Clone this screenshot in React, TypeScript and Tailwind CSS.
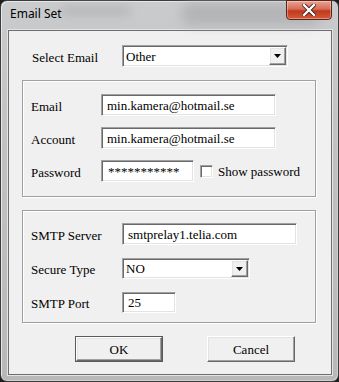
import React from "react";

const sunken =
  "border border-t-[#a0a0a0] border-l-[#a0a0a0] border-b-white border-r-white shadow-[inset_1px_1px_0_#696969,inset_-1px_-1px_0_#e3e3e3] bg-white";
const raised =
  "border border-t-white border-l-white border-b-[#696969] border-r-[#696969] shadow-[inset_-1px_-1px_0_#a0a0a0,inset_1px_1px_0_#e3e3e3] bg-[#f0f0f0]";
const group =
  "border border-[#a0a0a0] shadow-[1px_1px_0_#ffffff,inset_1px_1px_0_#ffffff]";

function DropArrow() {
  return (
    <div className={`${raised} w-[17px] h-full flex items-center justify-center`}>
      <svg width="7" height="4" viewBox="0 0 7 4">
        <path d="M0 0H7L3.5 4Z" fill="#000" />
      </svg>
    </div>
  );
}

function TextBox({ w, h = 22, value, pl = 5 }: { w: number; h?: number; value: string; pl?: number }) {
  return (
    <div
      className={`${sunken} flex items-center whitespace-nowrap overflow-hidden`}
      style={{ width: w, height: h, paddingLeft: pl }}
    >
      {value}
    </div>
  );
}

function Combo({ w, h, value }: { w: number; h: number; value: string }) {
  return (
    <div className={`${sunken} flex items-center p-[1px]`} style={{ width: w, height: h }}>
      <div className="flex-1 pl-[2px]">{value}</div>
      <DropArrow />
    </div>
  );
}

export default function App() {
  return (
    <div className="w-[339px] h-[382px] overflow-hidden bg-[#1e1e1e]">
      <div className="w-[339px] h-[382px] rounded-[7px] border border-[#3c3c3c] bg-[linear-gradient(180deg,#c9cbcd_0%,#bfc1c3_40%,#b6b8ba_100%)] flex flex-col shadow-[inset_1px_1px_0_#e8e8e8,inset_-1px_-1px_0_#d0d0d0]">
        {/* title bar */}
        <div className="h-[29px] flex items-start relative">
          <div className="absolute left-[180px] top-[2px] w-[140px] h-[22px] rounded-full bg-[#a9abad] blur-[6px] opacity-70" />
          <div className="absolute left-[60px] top-[4px] w-[70px] h-[12px] rounded-full bg-[#b3b5b7] blur-[4px] opacity-70" />
          <div className="relative pl-[9px] pt-[5px] text-[12px] text-black font-['Noto_Sans','Open_Sans',sans-serif] leading-[16px]">
            Email Set
          </div>
          <div className="relative ml-auto mr-[6px] mt-[-1px] w-[46px] h-[20px] rounded-b-[4px] border border-[#5a2418] bg-[linear-gradient(180deg,#e9a394_0%,#d66c56_45%,#c1391c_55%,#d5593a_100%)] flex items-center justify-center shadow-[inset_0_0_0_1px_rgba(255,255,255,0.35)]">
            <svg width="14" height="12" viewBox="0 0 14 12">
              <path d="M2 1L12 11M12 1L2 11" stroke="#3a1a12" strokeWidth="4" strokeLinecap="square" />
              <path d="M2 1L12 11M12 1L2 11" stroke="#ffffff" strokeWidth="2.4" strokeLinecap="square" />
            </svg>
          </div>
        </div>
        {/* client area */}
        <div className="ml-[7px] w-[324px] h-[345px] border border-[#6e6e6e] shadow-[0_0_0_1px_#e4e4e4] bg-[#f0f0f0] flex flex-col font-['Liberation_Serif','Times_New_Roman',serif] text-[13px] text-black leading-none">
          {/* Select Email */}
          <div className="mt-[14px] flex items-center pl-[23px]">
            <div className="w-[90px] pt-[3px]">Select Email</div>
            <Combo w={166} h={22} value="Other" />
          </div>
          {/* group 1 */}
          <div className={`${group} mt-[13px] ml-[13px] w-[294px] h-[117px] flex flex-col pl-[8px]`}>
            <div className="mt-[13px] flex items-center">
              <div className="w-[70px] pt-[2px]">Email</div>
              <TextBox w={175} value="min.kamera@hotmail.se" />
            </div>
            <div className="mt-[11px] flex items-center">
              <div className="w-[70px] pt-[2px]">Account</div>
              <TextBox w={175} value="min.kamera@hotmail.se" />
            </div>
            <div className="mt-[11px] flex items-center">
              <div className="w-[70px] pt-[2px]">Password</div>
              <TextBox w={93} value="***********" pl={6} />
              <div className={`${sunken} ml-[6px] w-[13px] h-[13px]`} />
              <div className="ml-[5px] pt-[1px]">Show password</div>
            </div>
          </div>
          {/* group 2 */}
          <div className={`${group} mt-[13px] ml-[13px] w-[294px] h-[113px] flex flex-col pl-[8px]`}>
            <div className="mt-[12px] flex items-center">
              <div className="w-[91px] pt-[2px]">SMTP Server</div>
              <TextBox w={175} value="smtprelay1.telia.com" />
            </div>
            <div className="mt-[13px] flex items-center">
              <div className="w-[91px] pt-[2px]">Secure Type</div>
              <Combo w={128} h={21} value="NO" />
            </div>
            <div className="mt-[13px] flex items-center">
              <div className="w-[91px] pt-[2px]">SMTP Port</div>
              <TextBox w={54} h={21} value="25" />
            </div>
          </div>
          {/* buttons */}
          <div className="mt-[13px] ml-[66px] flex gap-[44px]">
            <div className="border border-[#5a5a5a]">
              <div className={`${raised} w-[86px] h-[24px] flex items-center justify-center pt-[1px]`}>OK</div>
            </div>
            <div className={`${raised} w-[88px] h-[26px] flex items-center justify-center pt-[1px]`}>Cancel</div>
          </div>
        </div>
      </div>
    </div>
  );
}
